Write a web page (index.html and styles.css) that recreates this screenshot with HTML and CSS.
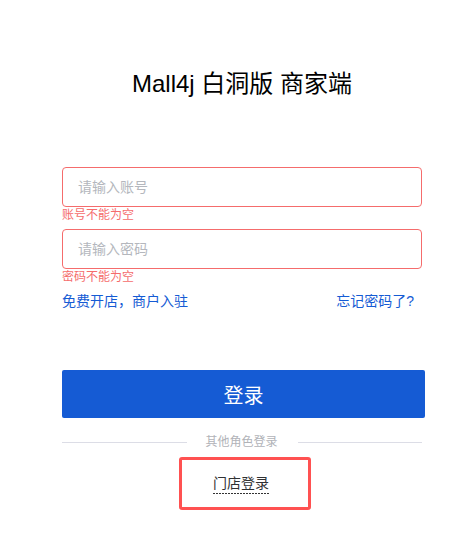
FILE: index.html
```html
<!DOCTYPE html>
<html lang="zh-CN">
<head>
<meta charset="utf-8">
<title>Mall4j 白洞版 商家端</title>
<link rel="stylesheet" href="styles.css">
</head>
<body>
<div class="login">
  <h1 class="title">Mall4j 白洞版 商家端</h1>
  <form class="form">
    <div class="field">
      <input class="input" type="text" placeholder="请输入账号">
      <div class="error">账号不能为空</div>
    </div>
    <div class="field">
      <input class="input" type="password" placeholder="请输入密码">
      <div class="error">密码不能为空</div>
    </div>
    <div class="links">
      <a class="link">免费开店，商户入驻</a>
      <a class="link">忘记密码了?</a>
    </div>
    <button class="btn" type="button">登录</button>
    <div class="divider">
      <span class="line"></span>
      <span class="divider-text">其他角色登录</span>
      <span class="line"></span>
    </div>
    <div class="other">
      <span class="other-link">门店登录</span>
    </div>
  </form>
</div>
</body>
</html>
```
FILE: styles.css
```css
html, body {
  margin: 0;
  padding: 0;
  background: #fff;
}
body {
  font-family: "Liberation Sans", "Noto Sans CJK SC", sans-serif;
  color: #303133;
}
.login {
  width: 360px;
  margin-left: 62px;
  padding-top: 70px;
}
.title {
  margin: 0;
  height: 28px;
  line-height: 28px;
  font-size: 24px;
  font-weight: normal;
  color: #000;
  text-align: center;
}
.form {
  margin: 69px 0 0;
}
.field {
  margin-bottom: 6px;
}
.input {
  display: block;
  box-sizing: border-box;
  width: 360px;
  height: 40px;
  margin: 0;
  padding: 0 15px;
  border: 1px solid #f56c6c;
  border-radius: 4px;
  font-family: inherit;
  font-size: 14px;
  color: #606266;
  outline: none;
  background: #fff;
}
.input::placeholder {
  color: #b4b7bd;
}
.error {
  height: 16px;
  font-size: 12px;
  line-height: 16px;
  color: #f56c6c;
}
.links {
  display: flex;
  justify-content: space-between;
  height: 20px;
  line-height: 20px;
  padding-right: 8px;
  font-size: 14px;
}
.link {
  color: #155bd4;
  cursor: pointer;
}
.btn {
  display: block;
  width: 363px;
  height: 48px;
  margin-top: 59px;
  padding: 0;
  border: none;
  border-radius: 2px;
  background: #155bd4;
  color: #fff;
  font-family: inherit;
  font-size: 20px;
}
.divider {
  display: flex;
  align-items: center;
  margin-top: 16px;
  height: 16px;
}
.line {
  flex: 1;
  height: 1px;
  background: #dcdde6;
}
.divider-text {
  padding: 0 20px 0 19px;
  font-size: 12px;
  line-height: 16px;
  color: #b1b3b8;
}
.other {
  box-sizing: border-box;
  width: 132px;
  height: 53px;
  margin: 7px 0 0 117px;
  padding-left: 31px;
  border: 3px solid #ff5151;
  border-radius: 3px;
  display: flex;
  align-items: center;
}
.other-link {
  font-size: 14px;
  line-height: 18px;
  padding-bottom: 2px;
  color: #303133;
  background-image: linear-gradient(to right, #333 66%, transparent 0);
  background-size: 3px 1px;
  background-repeat: repeat-x;
  background-position: left bottom;
}
```
